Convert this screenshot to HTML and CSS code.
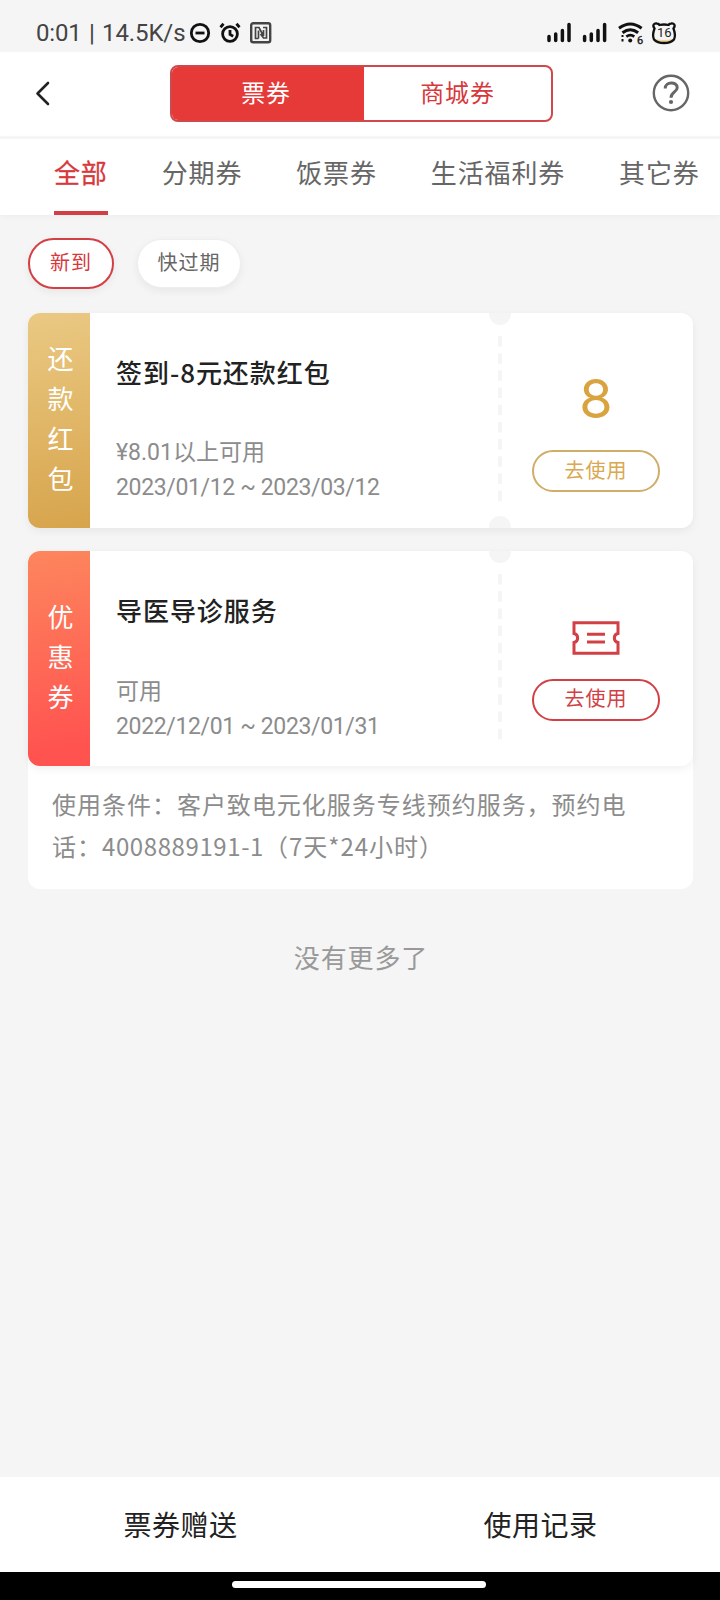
FILE: index.html
```html
<!DOCTYPE html>
<html lang="zh-CN">
<head>
<meta charset="utf-8">
<title>票券</title>
<link rel="stylesheet" href="styles.css">
</head>
<body>
<div class="screen">
  <div class="status">
    <span class="clock">0:01</span><span class="bar">|</span><span class="speed">14.5K/s</span>
    <svg class="status-left" width="84" height="24" viewBox="0 0 84 24" fill="none" stroke="#111" stroke-width="2.8">
      <circle cx="11" cy="12" r="8.7"/><path d="M6.5 12h9"/>
      <circle cx="41" cy="13" r="7.4"/><path d="M41 9v4.5l3.2 1.8M31.5 6.2l3-3.400M47.500 2.800l3 3.400"/>
      <rect x="62.200" y="2.200" width="19" height="19" rx="2" stroke="#444" stroke-width="2.400"/>
      <path d="M69.500 17.500h-3V6.500h3.500l4.500 8.500V9M69.500 9.500v8M74 6.500h3.500v10.500h-3l-3-4" stroke="#444" stroke-width="1.700"/>
    </svg>
    <svg class="status-right" width="134" height="26" viewBox="0 0 134 26" fill="none" stroke="#111">
      <path d="M3 20.500v-4M9.700 20.500v-6.500M16.400 20.500v-10M23 20.500v-16M38.600 20.500v-4M45.300 20.500v-6.500M52 20.500v-10M58.600 20.500v-16" stroke-width="3.500" stroke-linecap="round"/>
      <path d="M73 8.300q11.300-8.500 22.600 0" stroke-width="3"/>
      <path d="M76.500 12.800q7.800-6 15.600 0" stroke-width="3"/>
      <path d="M80.300 16.700q4-3 8 0" stroke-width="2.700"/>
      <circle cx="84.200" cy="20.500" r="2" fill="#111" stroke="none"/>
      <path d="M76.500 15v2M76.500 19v2.500" stroke-width="2"/>
      <text x="91" y="23.500" class="tiny">6</text>
      <path d="M108.500 18.500q9.500 3 19 0-2 4.500-9.500 4.500t-9.500-4.500z" fill="#efd79c" stroke="none"/>
      <path d="M108.500 8.500C106 5 108 3 111 3.500q1.500 0 2.500 1.500 4.500-1 9 0 1-1.500 2.500-1.500c3-.5 5 1.500 2.500 5q2.500 7 .5 11-3 3.500-10 3.500t-10-3.500q-2-4 .5-11z" stroke-width="2.300"/>
      <text x="111" y="17" class="battery">16</text>
    </svg>
  </div>

  <header class="header">
    <svg class="back" width="16" height="26" viewBox="0 0 16 26" fill="none" stroke="#222" stroke-width="2.600" stroke-linecap="round" stroke-linejoin="round"><path d="M13 3 2.500 13.500 13 24"/></svg>
    <div class="segment">
      <div class="seg active">票券</div>
      <div class="seg">商城券</div>
    </div>
    <svg class="help" width="38" height="38" viewBox="0 0 38 38" fill="none" stroke="#666" stroke-width="2.400">
      <circle cx="19" cy="19" r="17.200"/>
      <path d="M13.200 14.500c0-7.500 12-7.200 12-.8 0 4.300-6.200 4.300-6.200 10" stroke-width="3"/>
      <circle cx="19" cy="28" r="2.100" fill="#666" stroke="none"/>
    </svg>
  </header>

  <nav class="tabs">
    <div class="tab active">全部</div><div class="tab">分期券</div><div class="tab">饭票券</div><div class="tab">生活福利券</div><div class="tab">其它券</div>
  </nav>

  <main class="content">
    <div class="chips">
      <div class="chip active">新到</div>
      <div class="chip plain">快过期</div>
    </div>

    <section class="coupon">
      <div class="kind gold"><span>还</span><span>款</span><span>红</span><span>包</span></div>
      <div class="info">
        <h2>签到-8元还款红包</h2>
        <p>¥8.01以上可用</p>
        <p class="date">2023/01/12 ~ 2023/03/12</p>
      </div>
      <div class="divider"></div>
      <div class="action">
        <div class="amount">8</div>
        <div class="use use-gold">去使用</div>
      </div>
    </section>

    <div class="with-note">
      <section class="coupon">
        <div class="kind red"><span>优</span><span>惠</span><span>券</span></div>
        <div class="info">
          <h2>导医导诊服务</h2>
          <p class="lower">可用</p>
          <p class="date">2022/12/01 ~ 2023/01/31</p>
        </div>
        <div class="divider open-end"></div>
        <div class="action">
          <svg class="ticket" width="48" height="34" viewBox="0 0 48 34" fill="none" stroke="#d24045" stroke-width="3">
            <path d="M2 1.800H46V12.500a4.600 4.600 0 0 0 0 9V32.200H2V21.500a4.600 4.600 0 0 0 0-9Z"/>
            <path d="M15 13.200H33M15 21H33"/>
          </svg>
          <div class="use use-red">去使用</div>
        </div>
      </section>
      <div class="note">使用条件：客户致电元化服务专线预约服务，预约电<br>话：<span class="phone">4008889191-1</span>（7天*24小时）</div>
    </div>
    <div class="end">没有更多了</div>
  </main>

  <footer class="footer"><div>票券赠送</div><div>使用记录</div></footer>
  <div class="home"><div class="pill"></div></div>
</div>
</body>
</html>
```
FILE: styles.css
```css
* { box-sizing: border-box; }
body { margin: 0; background: #f5f5f5; font-family: "Noto Sans CJK SC", sans-serif; color: #666; }
.screen { width: 720px; height: 1600px; display: flex; flex-direction: column; overflow: hidden; background: #f5f5f5; }

.status { height: 52px; flex: none; display: flex; align-items: center; padding: 14px 40px 0 36px; font: 24px/38px Roboto, sans-serif; color: #444; }
.clock { width: 53px; letter-spacing: -0.2px; }
.bar { width: 13px; }
.speed { width: 87px; white-space: nowrap; letter-spacing: -0.1px; }
.status-left { flex: none; }
.status-right { flex: none; margin-left: auto; }
.tiny { font: 11px Roboto, sans-serif; fill: #222; stroke: #222; stroke-width: .4px; }
.battery { font: 13px Roboto, sans-serif; fill: #222; stroke: none; }

.header { height: 84px; flex: none; background: #fff; display: flex; align-items: center; padding: 0 30px 2px 35px; }
.segment { width: 383px; height: 57px; margin-left: 119px; display: flex; border: 2px solid #cf484b; border-radius: 8px; overflow: hidden; }
.seg { flex: 1; color: #d7383c; font-size: 24px; letter-spacing: 0.8px; line-height: 49px; text-align: center; }
.seg.active { flex: 0 0 192px; background: #e53a37; color: #fff; padding-right: 4px; }
.help { margin-left: auto; }

.tabs { height: 79px; flex: none; border-top: 3px solid #f5f5f5; background: #fff; display: flex; gap: 54px; padding: 0 20px 0 54px; box-shadow: 0 2px 6px rgba(0,0,0,.03); }
.tab { flex: none; height: 76px; font-size: 26px; letter-spacing: 0.850px; line-height: 66px; white-space: nowrap; }
.tab.active { color: #d7383c; border-bottom: 4px solid #d24045; -webkit-text-stroke: .3px; }

.content { flex: 1; padding: 23px 27px 0 28px; }
.chips { display: flex; align-items: center; gap: 23px; height: 51px; margin-bottom: 24px; }
.chip { font-size: 20px; letter-spacing: 1px; text-align: center; background: #fff; border-radius: 26px; box-shadow: 0 3px 8px rgba(0,0,0,.06); }
.chip.active { width: 86px; height: 51px; line-height: 43px; color: #d7383c; border: 2px solid #d24045; }
.chip.plain { width: 104px; height: 49px; line-height: 43px; border: 1px solid #eee; }

.coupon { position: relative; height: 215px; display: flex; background: #fff; border-radius: 12px; box-shadow: 0 3px 8px rgba(0,0,0,.06); }
.kind { width: 62px; border-radius: 12px 0 0 12px; display: flex; flex-direction: column; justify-content: center; align-items: center; color: #fff; font-size: 26px; line-height: 40.200px; padding: 0 0 5px 3px; }
.gold { background: linear-gradient(170deg, #eac983, #d7a44c); }
.red { background: linear-gradient(170deg, #fd865d, #ff5350 90%); }
.info { flex: 1; padding: 40px 0 0 26px; }
.info h2 { margin: 0 0 44px; font-size: 26px; font-weight: 500; letter-spacing: 0.950px; line-height: 38px; color: #222; white-space: nowrap; }
.info p { margin: 0; font-family: Roboto, "Noto Sans CJK SC", sans-serif; font-size: 23px; letter-spacing: 0; line-height: 35px; color: #8c8c8c; white-space: nowrap; }
.info .lower { padding-top: 1px; }
.info .date { letter-spacing: -0.360px; }
.divider { width: 22px; margin-right: 1px; position: relative; background: linear-gradient(#f5f5f5 60%, transparent 60%) 9px 23px / 4px 17.200px repeat-y; background-clip: content-box; padding: 23px 0 24px; background-origin: border-box; }
.divider::before, .divider::after { content: ""; position: absolute; left: 0; width: 22px; height: 12px; background: #f5f5f5; }
.divider::before { top: 0; border-radius: 0 0 11px 11px; }
.divider::after { bottom: 0; border-radius: 11px 11px 0 0; }
.divider.open-end::after { display: none; }
.action { width: 181px; display: flex; flex-direction: column; align-items: center; padding-right: 13px; }
.amount { height: 137px; padding-top: 54px; font: 54px/64px Inter, sans-serif; color: #d9a340; }
.use { width: 128px; height: 42px; border: 2px solid; border-radius: 21px; font-size: 20px; letter-spacing: 1px; line-height: 36px; text-align: center; }
.use-gold { color: #d9a850; border-color: #d0ad68; }
.use-red { color: #d24045; line-height: 34px; }
.ticket { margin: 70px 0 24px; flex: none; }

.with-note { margin-top: 23px; background: #fff; border-radius: 12px; height: 338px; }
.note { padding: 17px 0 0 24px; font-size: 24px; letter-spacing: 0.980px; line-height: 42px; color: #8c8c8c; white-space: nowrap; }
.phone { letter-spacing: 0.600px; }
.end { margin-top: 48px; padding-left: 1px; text-align: center; font-size: 26px; letter-spacing: 0.900px; line-height: 40px; color: #999; }

.footer { height: 95px; flex: none; display: flex; background: #fff; color: #222; font-size: 28px; letter-spacing: 0.500px; line-height: 95px; text-align: center; }
.footer div { flex: 1; padding-left: 1px; }
.home { height: 28px; flex: none; background: #000; display: flex; justify-content: center; padding-top: 9px; }
.pill { width: 254px; height: 7px; margin-right: 3px; border-radius: 4px; background: #fff; }
```
